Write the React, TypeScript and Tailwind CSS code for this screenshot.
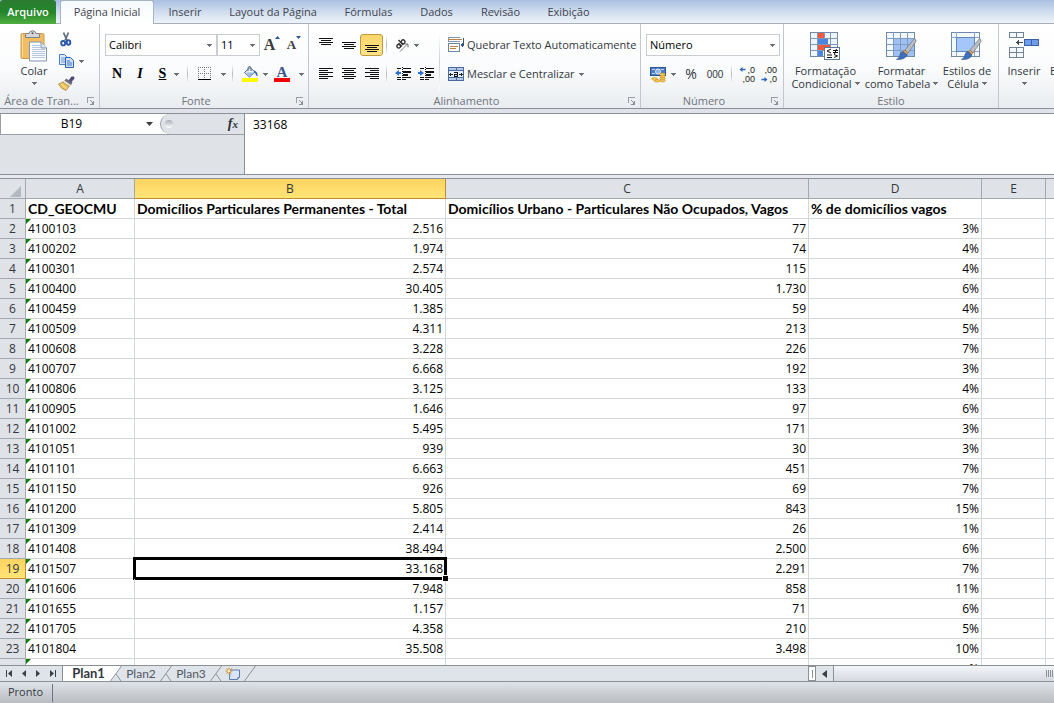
import React, { useState } from 'react';

type Row = { code: string; total: string; vacant: string; pct: string };

const rows: Row[] = [
    { code: '4100103', total: '2.516', vacant: '77', pct: '3%' },
    { code: '4100202', total: '1.974', vacant: '74', pct: '4%' },
    { code: '4100301', total: '2.574', vacant: '115', pct: '4%' },
    { code: '4100400', total: '30.405', vacant: '1.730', pct: '6%' },
    { code: '4100459', total: '1.385', vacant: '59', pct: '4%' },
    { code: '4100509', total: '4.311', vacant: '213', pct: '5%' },
    { code: '4100608', total: '3.228', vacant: '226', pct: '7%' },
    { code: '4100707', total: '6.668', vacant: '192', pct: '3%' },
    { code: '4100806', total: '3.125', vacant: '133', pct: '4%' },
    { code: '4100905', total: '1.646', vacant: '97', pct: '6%' },
    { code: '4101002', total: '5.495', vacant: '171', pct: '3%' },
    { code: '4101051', total: '939', vacant: '30', pct: '3%' },
    { code: '4101101', total: '6.663', vacant: '451', pct: '7%' },
    { code: '4101150', total: '926', vacant: '69', pct: '7%' },
    { code: '4101200', total: '5.805', vacant: '843', pct: '15%' },
    { code: '4101309', total: '2.414', vacant: '26', pct: '1%' },
    { code: '4101408', total: '38.494', vacant: '2.500', pct: '6%' },
    { code: '4101507', total: '33.168', vacant: '2.291', pct: '7%' },
    { code: '4101606', total: '7.948', vacant: '858', pct: '11%' },
    { code: '4101655', total: '1.157', vacant: '71', pct: '6%' },
    { code: '4101705', total: '4.358', vacant: '210', pct: '5%' },
    { code: '4101804', total: '35.508', vacant: '3.498', pct: '10%' },
];

const SELECTED_ROW = 19;

const Arrow = ({ className = '' }: { className?: string }) => (
    <svg width="5" height="3" viewBox="0 0 5 3" className={`shrink-0 ${className}`} shapeRendering="crispEdges">
        <path d="M0 0h5v1H4v1H3v1H2V2H1V1H0z" fill="#6b7077" />
    </svg>
);

const Sep = () => <span className="w-px h-5 shrink-0 bg-gradient-to-b from-white via-[#b4b8be] to-white" />;

const Lines = ({ bars }: { bars: [number, number, number][] }) => (
    <svg width="14" height="14" viewBox="0 0 14 14" shapeRendering="crispEdges">
        {bars.map(([x, y, w]) => <rect key={y} x={x} y={y} width={w} height="1" fill="#111" />)}
    </svg>
);

const Launcher = ({ label }: { label: string }) => (
    <button aria-label={label} className="w-4 h-4 flex items-center justify-center shrink-0">
        <svg width="8" height="8" viewBox="0 0 8 8" shapeRendering="crispEdges">
            <path d="M.5 6V.5H7" stroke="#9a9fa6" fill="none" />
            <path d="M3.5 3.5l3 3" stroke="#8b9097" fill="none" />
            <path d="M7 4v4H3V7h2V6h1V4z" fill="#8b9097" />
        </svg>
    </button>
);

const Group = ({ title, width, launcher = true, children }: { title: string; width: string; launcher?: boolean; children: React.ReactNode }) => (
    <section className={`${width} shrink-0 flex flex-col border-r border-[#c3c7cd]`}>
        <div className="h-[69px] shrink-0 pt-1">{children}</div>
        <div className="h-4 flex items-center text-[#6f757d]">
            <span className="flex-1 text-center whitespace-nowrap">{title}</span>
            {launcher && <Launcher label={`Opções de ${title}`} />}
        </div>
    </section>
);

const Combo = ({ label, value, className }: { label: string; value: string; className: string }) => (
    <label className={`relative flex items-center h-[22px] border border-[#c9ccd1] bg-white ${className}`}>
        <select aria-label={label} defaultValue={value} className="appearance-none w-full h-full pl-[3px] text-black outline-none">
            <option>{value}</option>
        </select>
        <Arrow className="absolute right-1 pointer-events-none" />
    </label>
);

const Tool = ({ label, width, active, children }: { label: string; width: string; active?: boolean; children: React.ReactNode }) => (
    <button aria-label={label} className={`${width} h-[22px] shrink-0 flex items-center justify-center gap-1 ${active ? 'rounded-[3px] border border-[#c2983a] bg-gradient-to-b from-[#fbd668] to-[#ffe38a]' : ''}`}>
        {children}
    </button>
);

const Big = ({ lines, width, icon, inline = true }: { lines: string[]; width: string; icon: React.ReactNode; inline?: boolean }) => (
    <button className={`${width} shrink-0 flex flex-col items-center`}>
        <span className="h-9 flex items-center">{icon}</span>
        {lines.map((line, i) => (
            <span key={line} className="h-[13px] leading-[13px] flex items-center gap-[3px] whitespace-nowrap">
                {line}
                {inline && i === lines.length - 1 && <Arrow />}
            </span>
        ))}
        {!inline && <span className="h-3 flex items-center"><Arrow /></span>}
    </button>
);

const PasteIcon = () => (
    <svg width="28" height="32" viewBox="0 0 28 32">
        <rect x="1" y="3.5" width="23" height="25" rx="1.500" fill="#f0bd62" stroke="#d09a48" />
        <path d="M2.500 5v22" stroke="#f9dc9c" />
        <path d="M5.500 7.500V4.500Q5.500 3.500 7 3.500H9Q9.500 .8 12.500 .8T16 3.500h2q1.500 0 1.500 1v3z" fill="#d5d8dc" stroke="#7b7f85" />
        <circle cx="12.500" cy="3.200" r="1" fill="#555" />
        <path d="M9.500 12h11.500l5.500 6v13h-17z" fill="#fafcff" stroke="#8295ad" />
        <path d="M21 12v6h5.500" fill="#dbe6f3" stroke="#8295ad" />
        <path d="M11.500 15.500h8M11.500 17.500h8M11.500 19.500h13M11.500 21.500h13M11.500 23.500h13M11.500 25.500h13M11.500 27.500h13" stroke="#b5c8de" shapeRendering="crispEdges" />
    </svg>
);

const CutIcon = () => (
    <svg width="12" height="15" viewBox="0 0 12 15" fill="none">
        <path d="M3.500 .5l3.500 8M8.500 .5l-3.500 8" stroke="#62707f" strokeWidth="1.800" />
        <ellipse cx="3.200" cy="11.200" rx="2" ry="2.200" stroke="#2757a8" strokeWidth="1.900" />
        <ellipse cx="8.500" cy="10.500" rx="1.800" ry="2.200" stroke="#2757a8" strokeWidth="1.900" />
    </svg>
);

const CopyIcon = () => (
    <svg width="16" height="14" viewBox="0 0 16 14">
        <path d="M.5 .5h5l3 3v7h-8z" fill="#dce9fa" stroke="#4a80cc" />
        <path d="M2 4h4M2 6h4M2 8h4" stroke="#6c9be0" />
        <path d="M6.500 3.500h5l3 3v7h-8z" fill="#cfe0f8" stroke="#2c62b4" />
        <path d="M8 7h3M8 9h5M8 11h5" stroke="#3f77cd" />
    </svg>
);

const BrushIcon = () => (
    <svg width="17" height="15" viewBox="0 0 17 15">
        <path d="M10.500 4.500l3-4h2.500l.5 2-3.500 4z" fill="#514a7c" />
        <path d="M8 2.500l6.500 4-1.500 2.500-6.500-4z" fill="#6d6a78" />
        <path d="M6.500 4.500L12.500 9l-1 1.500-6.500-4z" fill="#f3f1e8" stroke="#a39b84" strokeWidth=".5" />
        <path d="M5 6L11 10.500 8 14.500Q3 13 .5 8z" fill="#efc25c" stroke="#a07a2c" strokeWidth=".7" />
        <path d="M3 8l5.500 4.500" stroke="#fae9b0" />
    </svg>
);

const FontSizeIcon = ({ up }: { up: boolean }) => (
    <span className="flex items-start h-5">
        <span className={`font-['Liberation_Serif'] font-bold text-[#3b3b3b] leading-5 ${up ? 'text-base' : 'text-[13px]'}`}>A</span>
        <svg width="5" height="5" viewBox="0 0 5 5">
            <path d={up ? 'M0 4l2.500-3L5 4z' : 'M0 1h5L2.500 4z'} fill="#2c4f9e" />
        </svg>
    </span>
);

const BorderIcon = () => (
    <svg width="14" height="14" viewBox="0 0 14 14" shapeRendering="crispEdges">
        <path d="M.5 0v12M6.500 0v12M12.500 0v12M0 .5h13M0 6.500h13" stroke="#777" strokeDasharray="1 1" />
        <path d="M0 12.500h13" stroke="#000" />
    </svg>
);

const BucketIcon = () => (
    <svg width="17" height="16" viewBox="0 0 17 16">
        <path d="M2.500 6.500L8 1.500l5 4.500-5.500 5z" fill="#e6eef8" stroke="#4d6486" />
        <path d="M4.500 6.500h8l-5 4z" fill="#9bb9df" />
        <path d="M6 5V2q0-1.500 1.500-1.500T9 2v3" fill="none" stroke="#5c6e88" />
        <path d="M12 4.500q4 1 3.500 6-2-1-2.500-4z" fill="#2f66b8" />
        <rect y="12" width="16" height="4" fill="#ff0" />
    </svg>
);

const FontColorIcon = () => (
    <span className="w-4 flex flex-col items-center">
        <span className="h-3 leading-3 text-[15px] font-bold text-[#3b568c] font-['Liberation_Serif']">A</span>
        <span className="w-4 h-1 bg-[#f00000]" />
    </span>
);

const OrientationIcon = () => (
    <svg width="15" height="14" viewBox="0 0 15 14">
        <g transform="rotate(-45 6 6)" fill="none" stroke="#2f2f2f" strokeWidth="1.400">
            <circle cx="2.800" cy="6" r="1.900" /><path d="M4.900 3.800v4.500M7 1.500v6.800" /><circle cx="9" cy="6" r="1.900" />
        </g>
        <path d="M5 13.500l7.500-7.500M9.500 6h3.500v3.500" fill="none" stroke="#777" />
    </svg>
);

const IndentIcon = ({ right }: { right?: boolean }) => (
    <svg width="16" height="14" viewBox="0 0 16 14" shapeRendering="crispEdges">
        <path d="M2 1.500h4M8 1.500h8M2 10.500h4M8 10.500h8M2 12.500h4M8 12.500h3" stroke="#111" />
        <path d="M8 4h8v2H8zM8 7h5v2H8z" fill="#111" />
        <path d="M7.500 0v14" stroke="#111" strokeDasharray="1 1" />
        <path d={right ? 'M0 5h2V3l4 3-4 3V7H0z' : 'M6 5H4V3L0 6l4 3V7h2z'} fill="#2f6fd0" shapeRendering="auto" />
    </svg>
);

const WrapIcon = () => (
    <svg width="16" height="16" viewBox="0 0 16 16" shapeRendering="crispEdges">
        <path d="M0 .5h12M0 4.500h12M.5 0v5" stroke="#8393ab" />
        <rect x=".5" y="6.500" width="11" height="8" fill="#fff" stroke="#6e84a4" />
        <path d="M0 2.500h14M2 9.500h8M2 11.500h6" stroke="#c08040" />
        <path d="M15.500 1v7H14" stroke="#33588f" fill="none" />
        <path d="M15 5v6l-3-3z" fill="#33588f" />
    </svg>
);

const MergeIcon = () => (
    <svg width="16" height="14" viewBox="0 0 16 14" shapeRendering="crispEdges">
        <rect width="16" height="14" fill="#4a6a9c" />
        <path d="M1 1h7v2H1zM9 1h6v2H9zM1 11h7v2H1zM9 11h6v2H9z" fill="#b4c9ea" />
        <rect x="1" y="4" width="14" height="6" fill="#e4edfa" />
        <path d="M1 7.500h4M11 7.500h4M2.500 6v3M13.500 6v3" stroke="#222" />
        <path d="M6 5h4v5H6V7h3V6H6zM7 8v1h2V8z" fill="#111" fillRule="evenodd" />
    </svg>
);

const CurrencyIcon = () => (
    <svg width="17" height="17" viewBox="0 0 17 17">
        <rect x=".5" y="1.500" width="15" height="8" fill="#4f7dc4" stroke="#2c5596" />
        <circle cx="8" cy="5.500" r="2.500" fill="#8fb2e6" stroke="#e3edfa" /><path d="M2 3.500h3M11 3.500h3M2 7.500h3" stroke="#b9d0f0" />
        <g fill="#f7c94e" stroke="#b57f1c" strokeWidth=".5">
            <ellipse cx="12.500" cy="14.500" rx="2.800" ry="1.400" /><ellipse cx="12.500" cy="12.500" rx="2.800" ry="1.400" />
            <ellipse cx="12.500" cy="10.500" rx="2.800" ry="1.400" /><ellipse cx="12.500" cy="8.500" rx="2.800" ry="1.400" />
            <ellipse cx="7" cy="14.800" rx="3" ry="1.300" /><ellipse cx="4.500" cy="12.800" rx="3" ry="1.300" />
        </g>
    </svg>
);

const DecimalIcon = ({ more }: { more: boolean }) => (
    <span className="relative flex flex-col w-4 text-[9px] leading-[10px] text-[#222] font-['Liberation_Sans']">
        <span className="h-[9px] text-right">{more ? ',0' : ',00'}</span>
        <span className="h-[9px] text-right">{more ? ',00' : ',0'}</span>
        <svg width="7" height="5" viewBox="0 0 6 5" className={`absolute left-0 ${more ? 'top-0.5' : 'bottom-px'}`}>
            <path d={more ? 'M6 1.800H3V0L0 2.500 3 5V3.200h3z' : 'M0 1.800h3V0l3 2.500L3 5V3.200H0z'} fill="#2f64c0" />
        </svg>
    </span>
);

const CondIcon = () => (
    <svg width="31" height="30" viewBox="0 0 31 30" shapeRendering="crispEdges">
        <rect x=".5" y="1.500" width="27" height="24" fill="#eff5fd" stroke="#7189a8" />
        <path d="M7.500 1v24M14.500 1v24M20.500 1v24M0 7.500h28M0 13.500h28M0 19.500h28" stroke="#7f98b8" />
        <path d="M8 2h6v5H8zM8 14h12v5H8z" fill="#f0583f" />
        <path d="M8 8h10v5H8zM8 20h5v5H8z" fill="#4c85df" />
        <rect x="14.500" y="16.500" width="15" height="12" fill="#fff" stroke="#5d7796" />
        <g shapeRendering="auto" fill="none" stroke="#111">
            <path d="M21 18l-4 2 4 2M17 24h5M17 26.500h5M23 19.500h5M23 21.500h5M26.500 18l-2 5M24 23.500l3.500 1.500-3.500 1.500" />
        </g>
    </svg>
);

const Brush = () => (
    <g>
        <path d="M28.500 7.500q1.500 0 1.500 3L22 22l-3-3z" fill="#b9bcc1" stroke="#70757d" strokeWidth=".7" />
        <path d="M19 19l3 3-1.500 2-3.500-3z" fill="#e1a34e" stroke="#8c6225" strokeWidth=".5" />
        <path d="M17 20.500l4 3.500q-2 5-10.500 4.500 3.500-2 3.500-5 .5-2.500 3-3z" fill="#3f6fbb" stroke="#2c528f" strokeWidth=".6" />
    </g>
);

const TableIcon = () => (
    <svg width="32" height="30" viewBox="0 0 32 30">
        <rect x=".5" y="1.500" width="28" height="24" fill="#f3f8ff" stroke="#7189a8" />
        <rect x="8" y="7" width="20" height="18" fill="#9fc0f3" />
        <path d="M7.500 1v24M14.500 1v24M21.500 1v24M0 7.500h28M0 13.500h28M0 19.500h28" stroke="#7f9cc4" shapeRendering="crispEdges" />
        <Brush />
    </svg>
);

const StylesIcon = () => (
    <svg width="32" height="30" viewBox="0 0 32 30">
        <rect x=".5" y="1.500" width="28" height="24" fill="#f3f8ff" stroke="#7189a8" />
        <path d="M5.500 1v24M23.500 1v24M0 6.500h28M0 20.500h28" stroke="#8fa6c4" shapeRendering="crispEdges" />
        <rect x="5.500" y="6.500" width="18" height="14" fill="#a5c6f8" stroke="#5f86c0" />
        <Brush />
    </svg>
);

const InsertIcon = () => (
    <svg width="31" height="30" viewBox="0 0 31 30" shapeRendering="crispEdges">
        <path d="M.5 1.500h14v5H.5zM7.500 1v5M.5 16.500h14v10H.5zM7.500 16v11M0 21.500h15" fill="#f5f9ff" stroke="#71829b" />
        <path d="M15.500 8.500h14v6h-14z" fill="#6f9cea" stroke="#3b61a5" />
        <path d="M22.500 8v6" stroke="#3b61a5" />
        <path d="M7 11.500h7M9.500 9v5M8.500 10v3" stroke="#444d5c" />
    </svg>
);

const DeleteIcon = () => (
    <svg width="24" height="30" viewBox="0 0 24 30" shapeRendering="crispEdges">
        <path d="M6.500 1.500h14v5h-14zM13.500 1v5M6.500 16.500h14v10h-14zM13.500 16v11" fill="#f5f9ff" stroke="#71829b" />
        <path d="M8 8l9 8M17 8l-9 8" stroke="#c8372d" strokeWidth="2" />
    </svg>
);

const RibbonTabs = () => (
    <nav className="flex h-6 shrink-0 bg-gradient-to-b from-[#a9c0e2] via-[#cfdcee] to-[#eef3fa] border-b border-[#a9aeb6] text-[#3f454d]">
        <button className="w-14 h-6 rounded-t-[3px] bg-gradient-to-b from-[#2c7c31] via-[#23862a] to-[#4eae3f] text-white font-semibold">Arquivo</button>
        <button className="relative z-10 ml-1 w-[94px] h-6 rounded-t-[3px] border border-b-0 border-[#a9b4c6] bg-gradient-to-b from-[#f6f9fd] to-white">Página Inicial</button>
        <button className="w-[62px] pt-0.5">Inserir</button>
        <button className="w-[114px] pt-0.5">Layout da Página</button>
        <button className="w-[77px] pt-0.5">Fórmulas</button>
        <button className="w-[59px] pt-0.5">Dados</button>
        <button className="w-[69px] pt-0.5">Revisão</button>
        <button className="w-[67px] pt-0.5">Exibição</button>
    </nav>
);

const Ribbon = () => (
    <div className="flex h-[85px] shrink-0 overflow-hidden bg-gradient-to-b from-white via-[#fbfcfd] to-[#e9ecf0] border-b border-[#8b9097] text-[#33383f]">
        <Group title="Área de Tran..." width="w-[100px]">
            <div className="flex">
                <div className="w-14 pl-3">
                    <Big lines={['Colar']} width="w-11" inline={false} icon={<PasteIcon />} />
                </div>
                <div className="flex flex-col">
                    <Tool label="Recortar" width="w-5"><CutIcon /></Tool>
                    <Tool label="Copiar" width="w-[30px]"><CopyIcon /><Arrow /></Tool>
                    <Tool label="Pincel" width="w-5"><BrushIcon /></Tool>
                </div>
            </div>
        </Group>
        <Group title="Fonte" width="w-[209px]">
            <div className="flex flex-col gap-[7px] pt-1.5 pl-[5px]">
                <div className="flex items-center">
                    <Combo label="Fonte" value="Calibri" className="w-28" />
                    <Combo label="Tamanho" value="11" className="w-[43px]" />
                    <Tool label="Aumentar fonte" width="w-6"><FontSizeIcon up /></Tool>
                    <Tool label="Reduzir fonte" width="w-5"><FontSizeIcon up={false} /></Tool>
                </div>
                <div className="flex items-center">
                    <Tool label="Negrito" width="w-6"><b className="font-['Liberation_Serif'] text-sm font-black text-black">N</b></Tool>
                    <Tool label="Itálico" width="w-[22px]"><i className="font-['Liberation_Serif'] text-sm font-bold text-black">I</i></Tool>
                    <Tool label="Sublinhado" width="w-9"><u className="font-['Liberation_Serif'] text-sm font-bold text-black pr-1">S</u><Arrow /></Tool>
                    <Sep /><span className="w-1" />
                    <Tool label="Bordas" width="w-10"><BorderIcon /><span className="w-px" /><Arrow /></Tool>
                    <Sep />
                    <span className="w-1" />
                    <Tool label="Cor de preenchimento" width="w-9"><BucketIcon /><Arrow /></Tool>
                    <Tool label="Cor da fonte" width="w-8"><FontColorIcon /><span className="w-px" /><Arrow /></Tool>
                </div>
            </div>
        </Group>
        <Group title="Alinhamento" width="w-[332px]">
            <div className="flex pt-1.5 pl-[5px]">
                <div className="flex flex-col gap-[7px] w-[125px]">
                    <div className="flex items-center">
                        <Tool label="Alinhar em cima" width="w-[23px]"><Lines bars={[[0, 0, 14], [2, 2, 10], [0, 4, 14], [2, 6, 10]]} /></Tool>
                        <Tool label="Alinhar no meio" width="w-[23px]"><Lines bars={[[0, 4, 14], [2, 6, 10], [0, 8, 14], [2, 10, 10]]} /></Tool>
                        <Tool label="Alinhar embaixo" width="w-[23px]" active><Lines bars={[[0, 7, 14], [2, 9, 10], [0, 11, 14], [2, 13, 10]]} /></Tool>
                        <span className="w-[3px]" /><Sep />
                        <Tool label="Orientação" width="w-10"><OrientationIcon /><Arrow /></Tool>
                    </div>
                    <div className="flex items-center">
                        <Tool label="Alinhar à esquerda" width="w-[23px]"><Lines bars={[[0, 1, 14], [0, 3, 9], [0, 5, 14], [0, 7, 9], [0, 9, 14], [0, 11, 9]]} /></Tool>
                        <Tool label="Centralizar" width="w-[23px]"><Lines bars={[[0, 1, 14], [2, 3, 10], [0, 5, 14], [2, 7, 10], [0, 9, 14], [2, 11, 10]]} /></Tool>
                        <Tool label="Alinhar à direita" width="w-[23px]"><Lines bars={[[0, 1, 14], [5, 3, 9], [0, 5, 14], [5, 7, 9], [0, 9, 14], [5, 11, 9]]} /></Tool>
                        <span className="w-[3px]" /><Sep /><span className="w-1" />
                        <Tool label="Diminuir recuo" width="w-[23px]"><IndentIcon /></Tool>
                        <Tool label="Aumentar recuo" width="w-[23px]"><IndentIcon right /></Tool>
                    </div>
                </div>
                <span className="w-px h-14 bg-gradient-to-b from-white via-[#c9ccd1] to-white" />
                <div className="flex flex-col gap-[7px] pl-2">
                    <button className="h-[22px] flex items-center gap-[3px] whitespace-nowrap"><WrapIcon />Quebrar Texto Automaticamente</button>
                    <button className="h-[22px] flex items-center gap-[3px] whitespace-nowrap"><MergeIcon />Mesclar e Centralizar<Arrow className="ml-px" /></button>
                </div>
            </div>
        </Group>
        <Group title="Número" width="w-[143px]">
            <div className="flex flex-col gap-[7px] pt-1.5 pl-[5px]">
                <Combo label="Formato de número" value="Número" className="w-[134px]" />
                <div className="flex items-center">
                    <Tool label="Formato contábil" width="w-[34px]"><CurrencyIcon /><Arrow /></Tool>
                    <Tool label="Porcentagem" width="w-[22px]"><span className="text-sm">%</span></Tool>
                    <Tool label="Separador de milhares" width="w-[26px]"><span className="font-['Liberation_Sans'] text-[10px]">000</span></Tool>
                    <span className="w-[3px]" /><Sep /><span className="w-1" />
                    <Tool label="Aumentar casas decimais" width="w-[22px]"><DecimalIcon more /></Tool>
                    <Tool label="Diminuir casas decimais" width="w-[22px]"><DecimalIcon more={false} /></Tool>
                </div>
            </div>
        </Group>
        <Group title="Estilo" width="w-[215px]" launcher={false}>
            <div className="flex pl-1 gap-px">
                <Big lines={['Formatação', 'Condicional']} width="w-[75px]" icon={<CondIcon />} />
                <Big lines={['Formatar', 'como Tabela']} width="w-[75px]" icon={<TableIcon />} />
                <Big lines={['Estilos de', 'Célula']} width="w-[54px]" icon={<StylesIcon />} />
            </div>
        </Group>
        <Group title="Células" width="w-[150px]" launcher={false}>
            <div className="flex pl-1">
                <Big lines={['Inserir']} width="w-[42px]" inline={false} icon={<InsertIcon />} />
                <Big lines={['Excluir']} width="w-11" inline={false} icon={<DeleteIcon />} />
            </div>
        </Group>
    </div>
);

const FormulaBar = () => {
    const [formula, setFormula] = useState('33168');
    return (
        <div className="flex h-[62px] mt-1 shrink-0 border-y border-[#8b9097] bg-white">
            <div className="w-[245px] shrink-0 border-r border-[#8b9097] bg-[#dfe2e7]">
                <div className="flex items-center h-[21px] border-b border-[#9a9fa7]">
                    <label className="flex items-center w-40 h-full bg-white border-l border-[#9a9fa7]">
                        <input aria-label="Caixa de nome" defaultValue="B19" className="w-[141px] text-center text-[12px] text-black outline-none" />
                        <svg width="7" height="4" viewBox="0 0 7 4" className="ml-1"><path d="M0 0h7L3.500 4z" fill="#3a3d42" /></svg>
                    </label>
                    <span className="flex items-center flex-1 h-full bg-white">
                        <span className="flex items-center justify-between w-full h-full pl-1 pr-1.5 rounded-l-full border-l border-[#9a9fa7] bg-[#dfe2e7]">
                            <span className="w-2 h-2 rounded-full bg-gradient-to-b from-[#a9adb3] to-white" />
                            <button aria-label="Inserir função" className="font-['Liberation_Serif'] italic font-bold text-sm leading-4 text-[#2f3338]">f<span className="text-[11px]">x</span></button>
                        </span>
                    </span>
                </div>
            </div>
            <textarea aria-label="Fórmula" value={formula} onChange={(e) => setFormula(e.target.value)} className="flex-1 resize-none outline-none px-2 py-0.5 text-[12px] leading-[18px] text-black" />
        </div>
    );
};

const headCell = 'h-5 border-r border-b border-[#a3a8af] bg-[#dfe2e7] font-normal text-[#33373d] text-center p-0 pt-px leading-[18px]';
const selectedHead = 'h-5 border-r border-b border-[#c08c2c] bg-gradient-to-b from-[#fdd462] to-[#fee576] font-normal text-[#33373d] text-center p-0 pt-px leading-[18px]';
const cell = 'h-5 border-r border-b border-[#d4d7da] px-0.5 pt-px pb-0 whitespace-nowrap leading-[18px]';
const titleCell = `${cell} font-[Lato] text-sm/[18px] font-bold`;

const CodeMark = () => (
    <svg width="6" height="6" viewBox="0 0 6 6" className="absolute left-0 top-0"><path d="M0 0h5L0 5z" fill="#0a7a0a" /></svg>
);

const Sheet = () => (
    <div className="flex-1 min-h-0 overflow-hidden bg-white text-[12px] text-black border-t border-[#8b9097]">
        <table className="table-fixed border-separate border-spacing-0 w-[1110px]">
            <colgroup>
                <col className="w-[26px]" />
                <col className="w-[109px]" />
                <col className="w-[311px]" />
                <col className="w-[363px]" />
                <col className="w-[173px]" />
                <col className="w-16" />
                <col className="w-16" />
            </colgroup>
            <thead>
                <tr>
                    <th className={headCell} aria-label="Selecionar tudo">
                        <svg width="11" height="11" viewBox="0 0 11 11" className="ml-auto mr-1 mt-1"><path d="M11 0v11H0z" fill="#b3b8be" /></svg>
                    </th>
                    {['A', 'B', 'C', 'D', 'E', ''].map((col) => (
                        <th key={col} className={col === 'B' ? selectedHead : headCell}>{col}</th>
                    ))}
                </tr>
            </thead>
            <tbody>
                <tr>
                    <th className={headCell}>1</th>
                    <td className={titleCell}>CD_GEOCMU</td>
                    <td className={titleCell}>Domicílios Particulares Permanentes - Total</td>
                    <td className={titleCell}>Domicílios Urbano - Particulares Não Ocupados, Vagos</td>
                    <td className={titleCell}>% de domicílios vagos</td>
                    <td className={cell} />
                    <td className={cell} />
                </tr>
                {rows.map((row, i) => {
                    const selected = i + 2 === SELECTED_ROW;
                    return (
                        <tr key={row.code}>
                            <th className={selected ? selectedHead : headCell}>{i + 2}</th>
                            <td className={`${cell} relative`}><CodeMark />{row.code}</td>
                            <td className={`${cell} text-right ${selected ? 'relative' : ''}`}>
                                {row.total}
                                {selected && (
                                    <span className="absolute -inset-0.5 border-[3px] border-black pointer-events-none">
                                        <span className="absolute -right-1 -bottom-1 w-1.5 h-1.5 bg-black border-t border-l border-white" />
                                    </span>
                                )}
                            </td>
                            <td className={`${cell} text-right`}>{row.vacant}</td>
                            <td className={`${cell} text-right`}>{row.pct}</td>
                            <td className={cell} />
                            <td className={cell} />
                        </tr>
                    );
                })}
                <tr>
                    <th className={headCell} />
                    <td className={`${cell} relative`}><CodeMark /></td>
                    <td className={cell} />
                    <td className={cell} />
                    <td className={`${cell} text-right`}>%</td>
                    <td className={cell} />
                    <td className={cell} />
                </tr>
            </tbody>
        </table>
    </div>
);

const Slant = ({ left }: { left?: string }) => (
    <svg width="12" height="15" viewBox="0 0 12 15" className="shrink-0">
        {left && <path d="M0 0h12L1 15H0z" fill={left} />}
        <path d="M11.500 0L.5 15M6 8l5 7" stroke="#8b9097" fill="none" />
    </svg>
);

const navIcons = [
    { label: 'Primeira planilha', d: 'M1 0h1v7H1zM7 0v7L3 3.500z' },
    { label: 'Planilha anterior', d: 'M6 0v7L2 3.500z' },
    { label: 'Próxima planilha', d: 'M2 0v7l4-3.500z' },
    { label: 'Última planilha', d: 'M1 0v7l4-3.500zM6 0h1v7H6z' },
];

const SheetTabs = () => (
    <div className="flex h-[17px] shrink-0 border-y border-[#8b9097] bg-[#dfe3ea] text-[12px] text-[#50565e]">
        <div className="flex items-center w-[62px] px-0.5 shrink-0">
            {navIcons.map((n) => (
                <button key={n.label} aria-label={n.label} className="flex-1 flex justify-center">
                    <svg width="8" height="7" viewBox="0 0 8 7"><path d={n.d} fill="#3a4048" /></svg>
                </button>
            ))}
        </div>
        <button className="w-12 pl-1 bg-white border-l border-[#8b9097] font-[Lato] font-bold text-[13px] leading-[15px] text-[#33383f]">Plan1</button>
        <Slant left="#fff" />
        <button className="w-[38px] font-[Lato] text-[12px] leading-[15px]">Plan2</button>
        <Slant />
        <button className="w-[38px] font-[Lato] text-[12px] leading-[15px]">Plan3</button>
        <Slant />
        <button aria-label="Inserir planilha" className="w-[22px] flex items-center justify-center">
            <svg width="16" height="14" viewBox="0 0 16 14">
                <path d="M5 3h9.500v7l-2 2.500H4.500z" fill="#d9e4f8" stroke="#5c78ae" />
                <path d="M14.500 10h-2v2.500z" fill="#5c78ae" />
                <path d="M4 .5v7M.5 4h7M1.500 1.500l5 5M6.500 1.500l-5 5" stroke="#dc8a24" />
                <circle cx="4" cy="4" r="1.300" fill="#fff2b5" />
            </svg>
        </button>
        <svg width="12" height="15" viewBox="0 0 12 15" className="shrink-0"><path d="M11.500 0L.5 15" stroke="#8b9097" /></svg>
        <div className="flex-1" />
        <div className="flex items-center w-[246px] shrink-0">
            <span className="w-2 h-full border border-[#8b9097] bg-white flex items-center justify-center"><span className="w-px h-2 bg-[#8b9097]" /></span>
            <button aria-label="Rolar para a esquerda" className="w-[17px] flex justify-center">
                <svg width="5" height="8" viewBox="0 0 5 8"><path d="M5 0v8L0 4z" fill="#3a3d42" /></svg>
            </button>
            <div className="flex-1 h-full flex items-center justify-end border-l border-[#8b9097] bg-gradient-to-b from-[#f3f5f8] to-[#d5d9e0]">
                <svg width="8" height="7" viewBox="0 0 8 7" shapeRendering="crispEdges"><path d="M.5 0v7M2.500 0v7M4.500 0v7M6.500 0v7" stroke="#8b9097" /></svg>
            </div>
        </div>
    </div>
);

export default function App() {
    return (
        <div className="h-screen flex flex-col overflow-hidden bg-[#dfe3e9] font-['Open_Sans',sans-serif] text-[11px]">
            <RibbonTabs />
            <Ribbon />
            <FormulaBar />
            <div className="h-[3px] shrink-0 bg-[#e6e9f0]" />
            <Sheet />
            <SheetTabs />
            <footer className="flex items-center h-[21px] shrink-0 bg-gradient-to-b from-[#dfe2e6] to-[#b9bdc2] text-[#33383f]">
                <span className="w-[52px] pl-2">Pronto</span>
                <span className="w-px h-[18px] bg-[#70757d]" />
            </footer>
        </div>
    );
}
